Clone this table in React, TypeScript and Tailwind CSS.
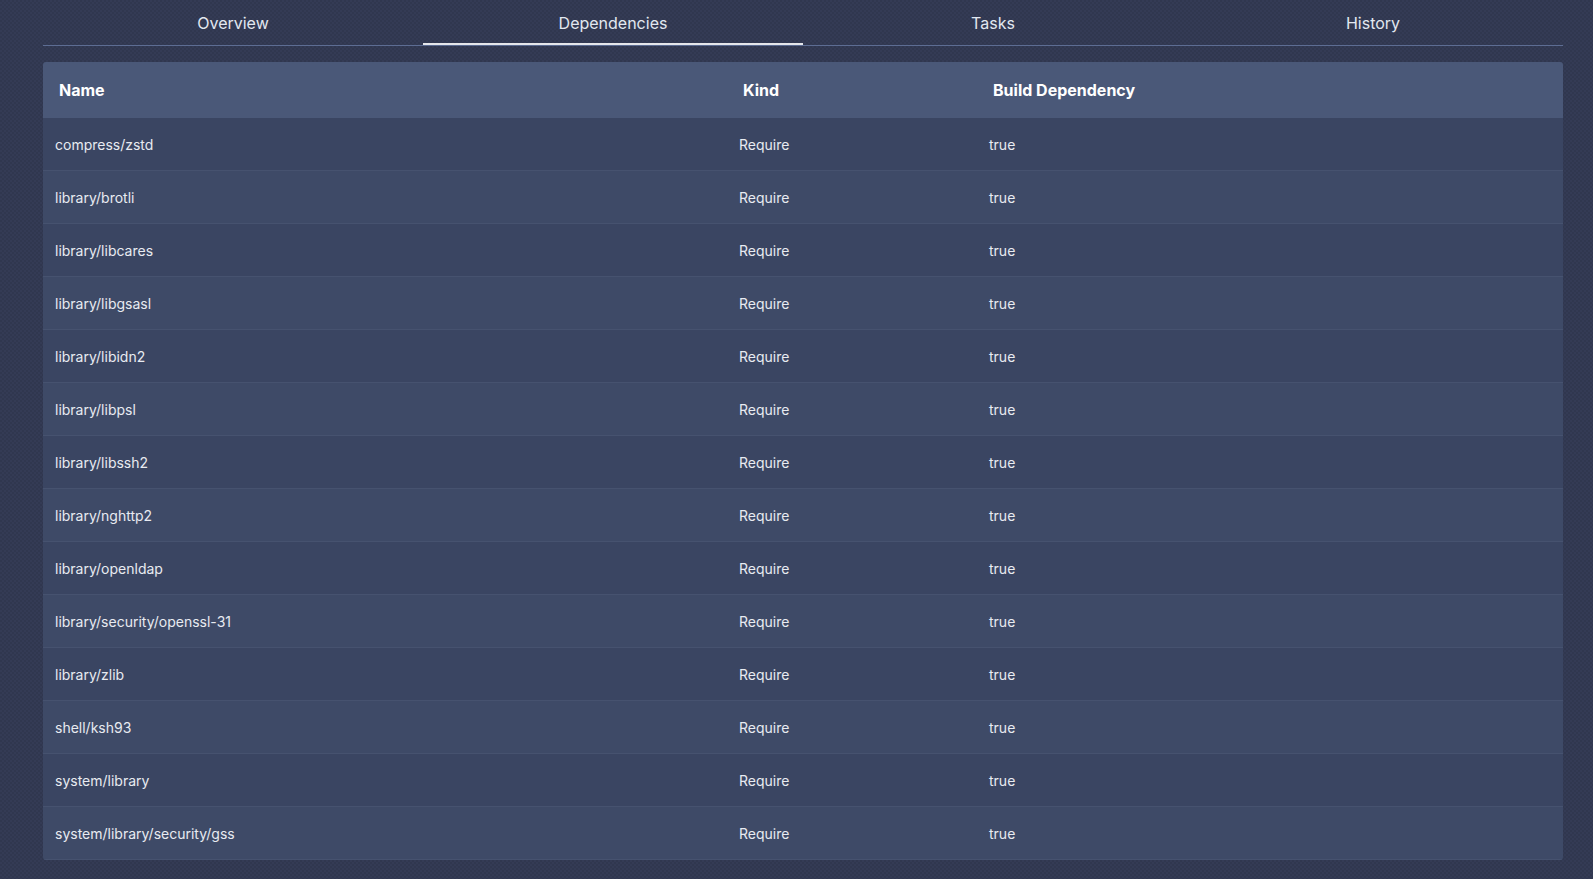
import { useState } from "react";

const TABS = ["Overview", "Dependencies", "Tasks", "History"];

const DEPS = [
  "compress/zstd",
  "library/brotli",
  "library/libcares",
  "library/libgsasl",
  "library/libidn2",
  "library/libpsl",
  "library/libssh2",
  "library/nghttp2",
  "library/openldap",
  "library/security/openssl-31",
  "library/zlib",
  "shell/ksh93",
  "system/library",
  "system/library/security/gss",
];

export default function App() {
  const [active, setActive] = useState(1);

  return (
    <div className="min-h-[879px] w-full bg-[repeating-conic-gradient(#343b55_0_25%,#30374f_0_50%)] bg-[length:4px_4px] pl-[43px] pr-[30px] font-['Inter',sans-serif]">
      {/* tabs */}
      <div className="grid grid-cols-4 border-b border-[#5d6d93]">
        {TABS.map((t, i) => (
          <button
            key={t}
            onClick={() => setActive(i)}
            className={
              "h-[45px] pt-[11px] pb-[10px] text-[16px] leading-[24px] text-[#e2e8f0] border-b-2 " +
              (i === active ? "border-[#e5e7eb]" : "border-transparent")
            }
          >
            {t}
          </button>
        ))}
      </div>

      {/* dependency table */}
      <div className="mt-4 overflow-hidden rounded-[3px]">
        <div className="grid h-[56px] grid-cols-[684px_250px_1fr] items-center bg-[#4a5878] text-[16px] font-bold text-white">
          <div className="px-4">Name</div>
          <div className="px-4">Kind</div>
          <div className="px-4">Build Dependency</div>
        </div>
        {DEPS.map((name, i) => (
          <div
            key={name}
            className={
              "grid h-[53px] grid-cols-[684px_250px_1fr] items-center border-b border-[#46526f] text-[14px] text-[#e8ebf1] " +
              (i % 2 === 0 ? "bg-[#3a4562]" : "bg-[#3e4a67]")
            }
          >
            <div className="px-3">{name}</div>
            <div className="px-3">Require</div>
            <div className="px-3">true</div>
          </div>
        ))}
      </div>
    </div>
  );
}
